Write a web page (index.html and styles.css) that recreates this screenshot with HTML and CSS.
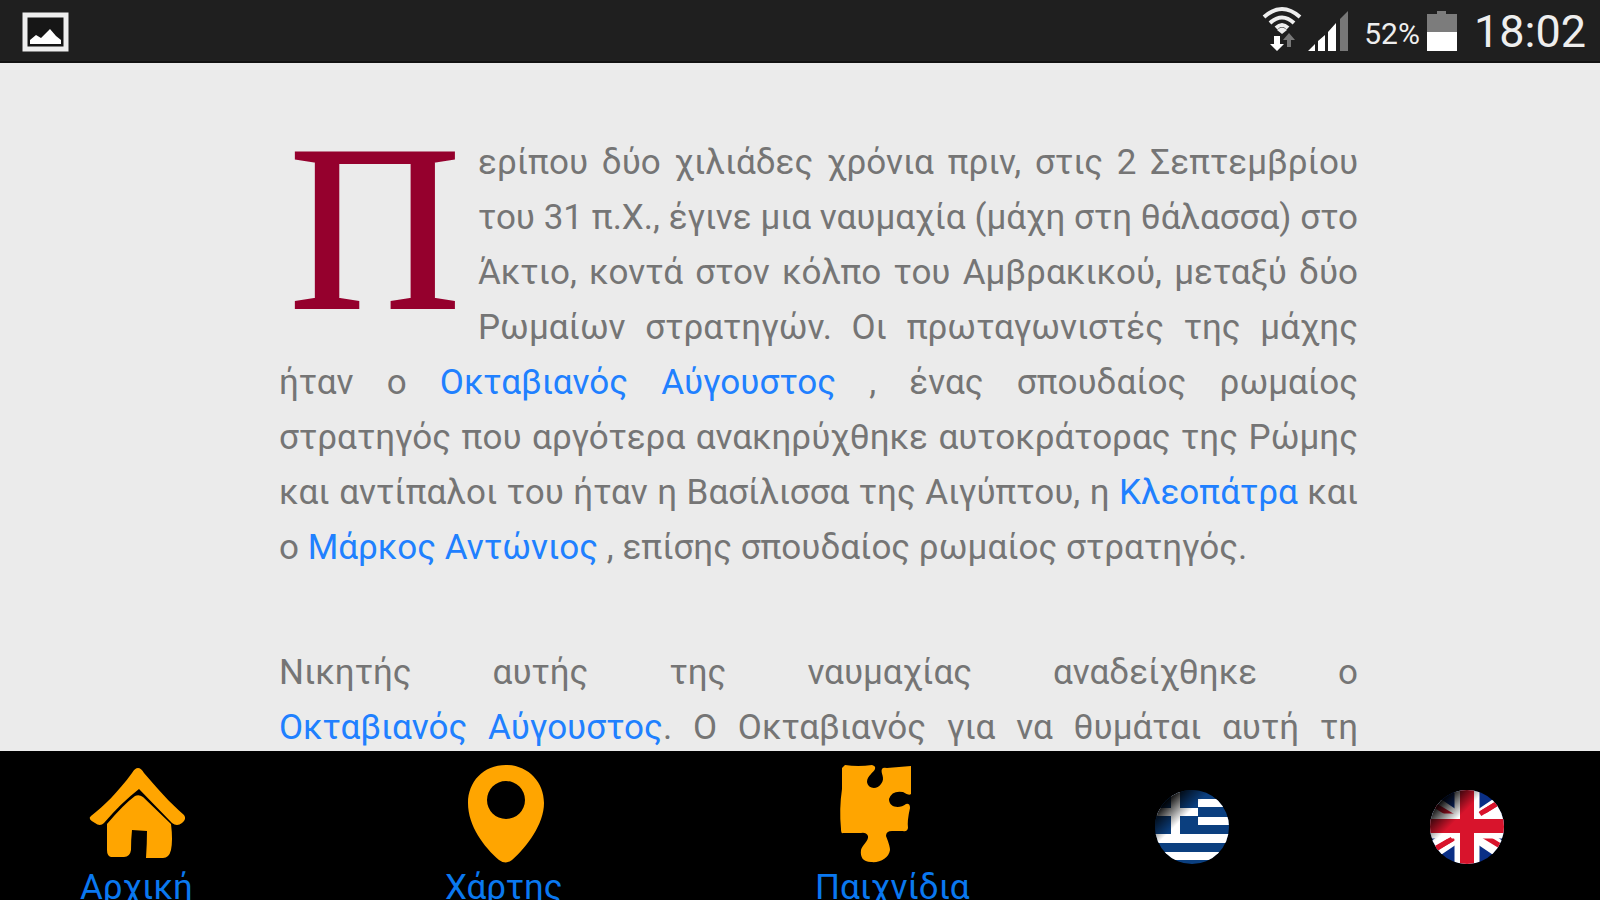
FILE: index.html
```
<!DOCTYPE html>
<html lang="el">
  <head>
    <meta charset="utf-8">
    <title>Ναυμαχία του Ακτίου</title>
    <meta name="viewport" content="width=device-width, initial-scale=1">
    <link rel="stylesheet" href="styles.css">
  </head>
  <body>
    <header class="status">
      <svg class="picture" width="48" height="40" viewBox="0 0 48 40">
        <rect x="3" y="3" width="41" height="34" fill="#161616" stroke="#eee" stroke-width="5"/>
        <path d="M8 32 V28 L14 23 L19 26 L28 17 L34 24 L39 28 V32 Z" fill="#fff"/>
      </svg>
      <div class="indicators">
        <svg class="wifi" width="40" height="46" viewBox="0 0 40 46">
          <g fill="none" stroke="#eee" stroke-width="4">
            <path d="M2 11 Q20 -5 38 11"/>
            <path d="M8 17 Q20 6 32 17"/>
            <path d="M14 22 Q20 16 26 22"/>
          </g>
          <path d="M15 24 Q20 19 25 24 L20 28 Z" fill="#eee"/>
          <path d="M12 30 h6 v8 h4 l-7 7 -7 -7 h4 z" fill="#fff"/>
          <path d="M25 41 v-7 h-4 l6 -7 6 7 h-4 v7 z" fill="#777"/>
        </svg>
        <svg class="signal" width="42" height="42" viewBox="0 0 42 42">
          <path d="M0 41 L7 34 V41 Z M10 41 V31 L17 25 V41 Z M20 41 V22 L28 13 V41 Z" fill="#fff"/>
          <path d="M32 41 V9 L40 1 V41 Z" fill="#777"/>
        </svg>
        <span class="percent">52%</span>
        <svg class="battery" width="32" height="42" viewBox="0 0 32 42">
          <path d="M1 4 H11 V1 H20 V4 H31 V22 H1 Z" fill="#7c7c7c"/>
          <rect x="1" y="22" width="30" height="19" fill="#fff"/>
        </svg>
        <span class="clock">18:02</span>
      </div>
    </header>

    <main class="content">
      <article class="story">
        <p><span class="dropcap">Π</span>ερίπου δύο χιλιάδες χρόνια πριν, στις 2 Σεπτεμβρίου του 31 π.Χ., έγινε μια ναυμαχία (μάχη στη θάλασσα) στο Άκτιο, κοντά στον κόλπο του Αμβρακικού, μεταξύ δύο Ρωμαίων στρατηγών. Οι πρωταγωνιστές της μάχης ήταν ο <a href="#augustus">Οκταβιανός Αύγουστος</a> , ένας σπουδαίος ρωμαίος στρατηγός που αργότερα ανακηρύχθηκε αυτοκράτορας της Ρώμης και αντίπαλοι του ήταν η Βασίλισσα της Αιγύπτου, η <a href="#cleopatra">Κλεοπάτρα</a> και ο <a href="#antony">Μάρκος Αντώνιος</a> , επίσης σπουδαίος ρωμαίος στρατηγός.</p>
        <p class="full">Νικητής αυτής της ναυμαχίας αναδείχθηκε ο <a href="#augustus">Οκταβιανός Αύγουστος</a>. Ο Οκταβιανός για να θυμάται αυτή τη</p>
      </article>
    </main>

    <nav class="tabs">
      <a class="tab" href="#home">
        <svg width="112" height="112" viewBox="0 0 112 112">
          <path d="M11 61 C24 51 38 37 52 18 Q58 8 64 18 C76 32 90 48 104 60 Q107 64 102 68 Q97 72 92 68 L59 34 Q41 48 24 68 Q20 72 15 68 Q7 64 11 61 Z" fill="#ffa500"/>
          <path d="M27 69 Q44 49 55 41 Q59 39 63 42 L91 69 Q93 85 91 95 Q89 103 83 103 H66 Q67 88 67 76 L52 75 Q51 84 51 95 Q50 102 44 102 H31 Q27 101 27 95 Z" fill="#ffa500"/>
        </svg>
        <span>Αρχική</span>
      </a>
      <a class="tab" href="#map">
        <svg width="118" height="112" viewBox="0 0 118 112">
          <path fill-rule="evenodd" d="M61 10 C38 10 23 27 23 48 C23 71 39 92 54 105 Q61 110 67 105 C82 92 99 69 99 48 C99 27 83 10 61 10 Z M61 26 a19 19 0 1 1 0 38 a19 19 0 1 1 0 -38 Z" fill="#ffa500"/>
        </svg>
        <span>Χάρτης</span>
      </a>
      <a class="tab" href="#games">
        <svg width="150" height="112" viewBox="0 0 150 112">
          <path d="M30 10 Q43 12 57 10 Q61 11 60 14 C59 17 52 21 52 27 C53 34 62 35 66 29 C71 23 65 18 67 14 Q68 12 72 13 L96 11 V39 Q94 41 88 37 Q77 35 74 44 C74 53 85 54 91 49 Q95 48 95 53 Q92 66 93 73 Q92 77 88 76 H77 Q71 76 71 81 Q75 91 75 95 C74 103 65 108 56 107 C48 107 45 102 46 95 C47 90 54 86 53 81 Q51 77 46 78 H28 Q26 79 26 74 Q24 54 27 34 V13 Z" fill="#ffa500"/>
        </svg>
        <span>Παιχνίδια</span>
      </a>
      <a class="tab flag" href="#el" aria-label="Ελληνικά">
        <svg width="74" height="74" viewBox="0 0 74 74">
          <defs>
            <clipPath id="round"><circle cx="37" cy="37" r="37"/></clipPath>
            <linearGradient id="shade" x1="0" y1="0" x2="1" y2="1">
              <stop offset="0.140" stop-color="#000"/>
              <stop offset="0.380" stop-color="#000" stop-opacity="0"/>
            </linearGradient>
          </defs>
          <g clip-path="url(#round)">
            <rect width="74" height="74" fill="#0b3f7f"/>
            <path d="M0 18 H43 V26 H0 Z M16 0 H25 V45 H16 Z M43 9 H74 V17 H43 Z M43 27 H74 V35 H43 Z M0 44 H74 V53 H0 Z M0 62 H74 V70 H0 Z" fill="#fff"/>
            <rect width="74" height="74" fill="url(#shade)"/>
          </g>
        </svg>
      </a>
      <a class="tab flag" href="#en" aria-label="English">
        <svg width="74" height="74" viewBox="0 0 74 74">
          <g clip-path="url(#round)">
            <rect width="74" height="74" fill="#0a2f86"/>
            <path d="M-18 0 L92 74 M92 0 L-18 74" stroke="#fff" stroke-width="17"/>
            <path d="M50 24 L78 7 M-4 64 L24 48 M-4 10 L24 27 M54 46 L80 62" stroke="#d8142c" stroke-width="5"/>
            <path d="M37 0 V74 M0 36 H74" stroke="#fff" stroke-width="25"/>
            <path d="M37 0 V74 M0 36 H74" stroke="#d8142c" stroke-width="14"/>
            <path d="M50 24 L66 14 M6 59 L22 49" stroke="#d8142c" stroke-width="5"/>
            <rect width="74" height="74" fill="url(#shade)"/>
          </g>
        </svg>
      </a>
    </nav>
  </body>
</html>
```
FILE: styles.css
```
*{
  box-sizing:border-box;
  }
body{
  margin:0;
  height:100vh;
  display:grid;
  grid-template-rows:auto 1fr auto;
  overflow:hidden;
  background:#ebebeb;
  color:#757575;
  font-family:Roboto, "Noto Sans", sans-serif;
  font-size:35px;
  line-height:55px;
}
a{
  color:#2080ff;
  text-decoration:none;
  }
svg{
  display:block;
  flex:none;
  }

/* phone status bar */
.status{
  display:flex;
  justify-content:space-between;
  height:63px;
  padding:12px 14px 0 22px;
  background:#1f1f1f;
  border-bottom:2px solid #111;
  color:#eee;
  }
.indicators{
  display:flex;
  align-items:flex-end;
  height:40px;
  line-height:40px;
  }
.signal{
  margin:0 14px 0 6px;
  }
.percent{
  font-size:30px;
  line-height:36px;
  margin-right:6px;
  }
.clock{
  font-size:45px;
  margin-left:16px;
  }

.content{
  min-height:0;
  overflow:hidden;
  padding:72px 242px 0 279px;
  }
.story{
  text-align:justify;
  }
.story p{
  margin:0 0 70px;
  }
.story a{
  white-space:nowrap;
  }
.story .full{
  text-align-last:justify;
  }
.dropcap{
  float:left;
  width:199px;
  height:220px;
  padding-left:10px;
  color:#95002d;
  font-family:"Liberation Serif", serif;
  font-size:238px;
  line-height:186px;
  -webkit-text-stroke:2px #95002d;
  }

/* bottom bar, the labels run past the edge of the screen */
.tabs{
  display:grid;
  grid-template-columns:73fr 74fr 68fr 55fr 34fr;
  justify-items:start;
  height:149px;
  padding-left:5%;
  background:#000;
  overflow:hidden;
  }
.tab{
  display:flex;
  flex-direction:column;
  color:#0a78f0;
  line-height:42px;
  padding-top:4px;
  }
.flag{
  padding-top:39px;
  }
```
